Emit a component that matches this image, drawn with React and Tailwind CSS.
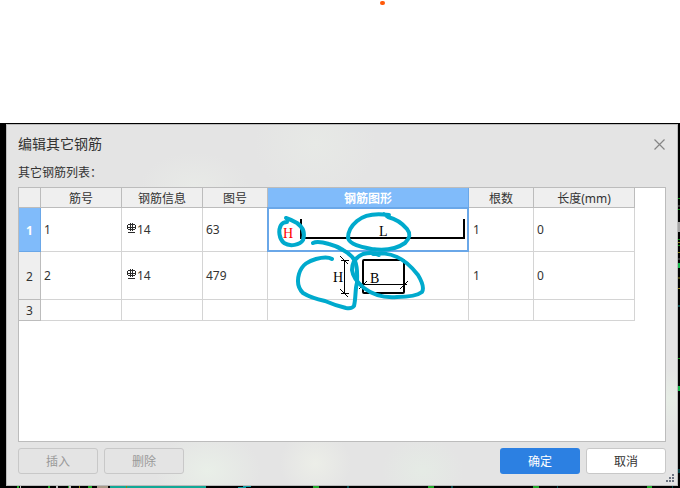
import React, { useState } from 'react';

const COLUMNS = ['筋号', '钢筋信息', '图号', '钢筋图形', '根数', '长度(mm)'];

const ROWS = [
  { id: '1', size: '14', shape: '63', count: '1', length: '0', height: 'h-[44px]' },
  { id: '2', size: '14', shape: '479', count: '1', length: '0', height: 'h-[48px]' },
  { id: '', size: '', shape: '', count: '', length: '', height: 'h-[21px]' },
];

function RebarSymbol() {
  return (
    <svg width="9" height="10" viewBox="0 0 9 10" fill="none" stroke="#2b2b2b" className="mb-[4px] mr-px shrink-0" aria-hidden="true">
      <path d="M3.5 0V8M5.5 0V8M1 1.5H8M.5 2V6M8.5 2V6M0 4.5H9M1 6.5H8M1 9.5H8" />
    </svg>
  );
}

// U-shaped bar with two hooks
function HookedBar() {
  return (
    <svg width="200" height="42" viewBox="0 0 200 42" className="block" aria-hidden="true">
      <path d="M33 10V29H196V10" fill="none" stroke="#000" strokeWidth="2" />
      <text x="15" y="29" fontSize="14" fill="#ff0000" className="font-['Liberation_Serif',serif]">H</text>
      <text x="111" y="27" fontSize="14" fill="#000" className="font-['Liberation_Serif',serif]">L</text>
    </svg>
  );
}

// Closed stirrup with H and B dimensions
function Stirrup() {
  return (
    <svg width="200" height="47" viewBox="0 0 200 47" className="block" aria-hidden="true">
      <rect x="95" y="8" width="41" height="33" rx="1" fill="none" stroke="#000" strokeWidth="2" />
      <g fill="none" stroke="#000">
        <path d="M76.5 8V42M73 8.5H81M73 41.5H81M92 32.5H139" />
        <path d="M72 4L80 12M72 37L80 45M91 37L99 29M132 37L140 29" />
      </g>
      <text x="65" y="30" fontSize="14" className="font-['Liberation_Serif',serif]">H</text>
      <text x="102" y="31" fontSize="14" className="font-['Liberation_Serif',serif]">B</text>
    </svg>
  );
}

// Pen annotations drawn over the figures
function InkMarks() {
  return (
    <svg
      width="200"
      height="113"
      viewBox="268 208 200 113"
      fill="none"
      stroke="#00aacd"
      strokeWidth="4"
      strokeLinecap="round"
      strokeLinejoin="round"
      className="pointer-events-none absolute left-0 top-0 z-10 overflow-visible"
      aria-hidden="true"
    >
      <path d="M286 218Q292 220 297 223C304 228 305 234 303 240C300 245 290 247 284 243C279 239 278 230 281 225Q283 222 287 222" />
      <path d="M389 215C376 213 364 215 357 221C351 226 348 232 348 238C350 245 362 247 372 249C387 251 398 248 405 243C410 238 411 234 407 229C402 223 396 219 388 217L384 214" />
      <path d="M313 243C317 241 322 242 329 244Q337 246 343 250Q352 255 355 261C358 268 357 276 357 283C355 289 356 298 354 306Q352 309 346 308Q334 305 325 301Q311 298 303 293C298 288 297 281 299 274C302 264 309 261 316 259Q327 256 332 259" />
      <path d="M379 255C374 252 367 253 363 254C356 257 352 262 352 270C353 278 359 284 364 288C373 295 385 298 397 297C406 297 417 296 422 292C425 287 421 280 418 275C411 266 404 260 397 257C388 253 382 253 373 254" />
    </svg>
  );
}

function Grip() {
  return (
    <svg width="8" height="8" viewBox="0 0 8 8" fill="#6b7280" className="absolute bottom-[3px] right-[3px]" aria-hidden="true">
      <path d="M6 0h2v2h-2zM3 3h2v2h-2zM6 3h2v2h-2zM0 6h2v2h-2zM3 6h2v2h-2zM6 6h2v2h-2z" />
    </svg>
  );
}

// Slivers of the CAD model visible around the dialog
function ModelEdges() {
  return (
    <>
      <svg width="680" height="2" viewBox="0 0 680 2" className="absolute bottom-0 left-0" aria-hidden="true">
        <path d="M110 1H206" stroke="#12a896" strokeWidth="2" />
        <path d="M97 1H108" stroke="#a89a88" strokeWidth="2" />
        <path d="M17 1h2M48 1h2M68 1h1M88 1h4M313 1h6M428 1h6M533 1h6M647 1h5" stroke="#21a82a" strokeWidth="2" />
        <path d="M20 1h1M56 1h2M69 1h2" stroke="#bdbdbd" strokeWidth="2" />
        <path d="M79 1h1M126 1h1" stroke="#8a8a10" strokeWidth="2" />
        <path d="M238 1.5h8M243 .5h8M347 1h2M451 1h2M557 1h1M672 1h1" stroke="#0b9aa0" />
      </svg>
      <svg width="2" height="364" viewBox="0 0 2 364" className="absolute right-0 top-0" aria-hidden="true">
        <path d="M0 75.5h2M0 86.5h2M0 116.5h2M0 122.5h2M0 235.5h2" stroke="#0b8a12" />
        <path d="M0 83h2M0 136h2" stroke="#6a6a6a" />
        <path d="M1 99v10" stroke="#a5a5a5" strokeWidth="2" />
        <path d="M0 119.5h2M0 129.5h2M0 155h2M0 165.5h2" stroke="#8a8218" />
        <path d="M1 140v5M1 263v5" stroke="#15b84a" strokeWidth="2" />
        <path d="M0 183h2M1 346v4" stroke="#0a8a90" />
      </svg>
    </>
  );
}

export default function App() {
  const [selected, setSelected] = useState(0);

  return (
    <div className="flex min-h-screen flex-col bg-white font-['Noto_Sans','Noto_Sans_CJK_SC',sans-serif] text-[12px] leading-4 text-[#333333]">
      <header className="flex h-[123px] justify-center pl-[85px] pt-px">
        <span className="h-[4px] w-[5px] rounded-full bg-[#ff5a0a]" />
      </header>

      <main className="relative flex grow flex-col bg-black pb-[2px] pl-[6px] pr-[2px] pt-px">
        <ModelEdges />
        <section
          role="dialog"
          aria-labelledby="dialog-title"
          className="relative flex grow flex-col border border-[#bcbcbc] bg-[#e4e4e4] bg-[radial-gradient(ellipse_at_46%_5%,#e7e9e6,transparent_12%),radial-gradient(ellipse_at_30%_96%,#e9efe8,transparent_8%),radial-gradient(ellipse_at_46%_94%,#eceee8,transparent_7%),radial-gradient(ellipse_at_62%_96%,#e5ebe5,transparent_7%),radial-gradient(ellipse_at_99%_76%,#e6ede5,transparent_8%),radial-gradient(ellipse_at_28%_17%,#e8eae7,transparent_8%)] px-[11px] pb-[11px]"
        >
          <div className="flex h-[38px] items-center justify-between pr-px">
            <h1 id="dialog-title" className="text-[14px] leading-5">编辑其它钢筋</h1>
            <button type="button" aria-label="关闭" className="text-[#858585]">
              <svg width="11" height="11" viewBox="0 0 11 11" fill="none" stroke="currentColor" strokeWidth="1.2">
                <path d="M.5.5l10 10M10.5.5l-10 10" />
              </svg>
            </button>
          </div>
          <p id="list-label" className="h-6 pt-[2px]">其它钢筋列表：</p>

          <div className="grow border border-[#bcbcbc] bg-white">
            <table aria-labelledby="list-label" className="w-[616px] table-fixed border-separate border-spacing-0">
              <colgroup>
                <col className="w-[22px]" />
                <col className="w-[81px]" />
                <col className="w-[81px]" />
                <col className="w-[65px]" />
                <col className="w-[201px]" />
                <col className="w-[65px]" />
                <col className="w-[101px]" />
              </colgroup>
              <thead>
                <tr className="h-5">
                  <th className="border-b border-r border-[#bcbcbc] bg-[#efefef] p-0" />
                  {COLUMNS.map((name) => (
                    <th
                      key={name}
                      scope="col"
                      className={
                        name === '钢筋图形'
                          ? 'border-b border-r border-[#6aa7e8] bg-[#80bbfa] p-0 pt-[2px] font-bold text-white'
                          : 'border-b border-r border-[#bcbcbc] bg-[#efefef] p-0 pt-[2px] font-normal'
                      }
                    >
                      {name}
                    </th>
                  ))}
                </tr>
              </thead>
              <tbody>
                {ROWS.map((row, i) => (
                  <tr key={i} className={row.height} onClick={() => setSelected(i)}>
                    <th
                      scope="row"
                      className={
                        i === selected
                          ? 'border-b border-r border-[#6aa7e8] bg-[#80bbfa] p-0 pt-[2px] font-bold text-white'
                          : 'border-b border-r border-[#bcbcbc] bg-[#efefef] p-0 pt-[2px] font-normal'
                      }
                    >
                      {i + 1}
                    </th>
                    <td className="border-b border-r border-[#d4d4d4] p-0 pl-[3px]">{row.id}</td>
                    <td className="border-b border-r border-[#d4d4d4] p-0 pl-[5px]">
                      {row.size && (
                        <span className="flex items-center">
                          <RebarSymbol />
                          {row.size}
                        </span>
                      )}
                    </td>
                    <td className="border-b border-r border-[#d4d4d4] p-0 pl-[3px]">{row.shape}</td>
                    <td className="relative border-b border-r border-[#d4d4d4] p-0">
                      {i === selected && <span className="absolute -inset-px border-2 border-[#6aa7e8]" />}
                      {i === 0 && <HookedBar />}
                      {i === 1 && <Stirrup />}
                      {i === 0 && <InkMarks />}
                    </td>
                    <td className="border-b border-r border-[#d4d4d4] p-0 pl-[4px]">{row.count}</td>
                    <td className="border-b border-r border-[#d4d4d4] p-0 pl-[3px]">{row.length}</td>
                  </tr>
                ))}
              </tbody>
            </table>
          </div>

          <footer className="flex justify-between pt-[6px]">
            <div className="flex gap-[6px]">
              <button type="button" disabled className="h-[26px] w-20 rounded-[3px] border border-[#c8c8c8] bg-[#e4e4e4] pt-px text-[#999999]">
                插入
              </button>
              <button type="button" disabled className="h-[26px] w-20 rounded-[3px] border border-[#c8c8c8] bg-[#e4e4e4] pt-px text-[#999999]">
                删除
              </button>
            </div>
            <div className="flex gap-[6px]">
              <button type="button" className="h-[26px] w-20 rounded-[3px] bg-[#2c80e2] pt-px text-white">
                确定
              </button>
              <button type="button" className="h-[26px] w-20 rounded-[3px] border border-[#c8c8c8] bg-white pt-px">
                取消
              </button>
            </div>
          </footer>
          <Grip />
        </section>
      </main>
    </div>
  );
}
